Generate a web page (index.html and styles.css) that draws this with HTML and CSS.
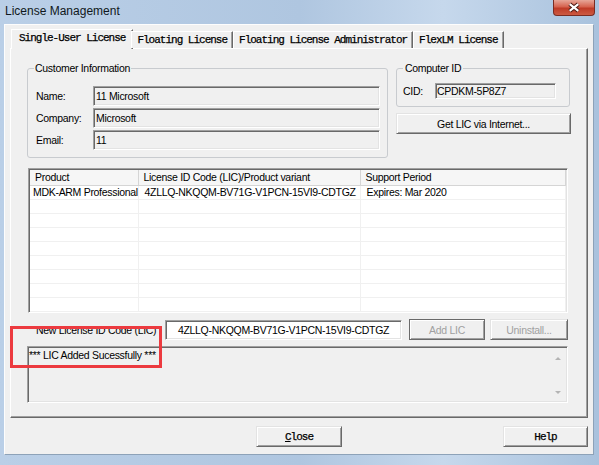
FILE: index.html
```html
<!DOCTYPE html>
<html lang="en">
<head>
  <meta charset="UTF-8">
  <title>License Management</title>
  <link rel="stylesheet" href="styles.css">
</head>
<body>
  <div class="window">
    <div class="titlebar">
      <span class="title">License Management</span>
      <button class="close-x" title="Close">
        <svg width="42" height="15" viewBox="0 0 42 15">
          <path d="M16.5 4 L25.5 11 M25.5 4 L16.5 11" stroke="#4b1a14" stroke-width="4.4" fill="none"/>
          <path d="M16.5 4 L25.5 11 M25.5 4 L16.5 11" stroke="#fff" stroke-width="2.2" fill="none"/>
        </svg>
      </button>
    </div>

    <div class="client">
      <div class="tabs">
        <div class="tab active">Single-User License</div>
        <div class="tab">Floating License</div>
        <div class="tab">Floating License Administrator</div>
        <div class="tab">FlexLM License</div>
      </div>

      <div class="panel">
        <div class="top-row">
          <fieldset class="group customer">
            <legend>Customer Information</legend>
            <div class="field">
              <label>Name:</label>
              <input type="text" class="edit" readonly value="11 Microsoft">
            </div>
            <div class="field">
              <label>Company:</label>
              <input type="text" class="edit" readonly value="Microsoft">
            </div>
            <div class="field">
              <label>Email:</label>
              <input type="text" class="edit" readonly value="11">
            </div>
          </fieldset>

          <div class="right-col">
            <fieldset class="group computer">
              <legend>Computer ID</legend>
              <div class="field">
                <label>CID:</label>
                <input type="text" class="edit cid" readonly value="CPDKM-5P8Z7">
              </div>
            </fieldset>
            <button class="btn get-lic">Get LIC via Internet...</button>
          </div>
        </div>

        <div class="listview">
          <table>
            <thead>
              <tr>
                <th class="col-product">Product</th>
                <th class="col-lic">License ID Code (LIC)/Product variant</th>
                <th class="col-period">Support Period</th>
              </tr>
            </thead>
            <tbody>
              <tr>
                <td class="first">MDK-ARM Professional</td>
                <td>4ZLLQ-NKQQM-BV71G-V1PCN-15VI9-CDTGZ</td>
                <td>Expires: Mar 2020</td>
              </tr>
              <tr><td></td><td></td><td></td></tr>
              <tr><td></td><td></td><td></td></tr>
              <tr><td></td><td></td><td></td></tr>
              <tr><td></td><td></td><td></td></tr>
              <tr><td></td><td></td><td></td></tr>
              <tr><td></td><td></td><td></td></tr>
              <tr><td></td><td></td><td></td></tr>
              <tr><td></td><td></td><td></td></tr>
            </tbody>
          </table>
        </div>

        <div class="lic-row">
          <label>New License ID Code (LIC)</label>
          <input type="text" class="edit new-lic" value="4ZLLQ-NKQQM-BV71G-V1PCN-15VI9-CDTGZ">
          <button class="btn default add-lic" disabled>Add LIC</button>
          <button class="btn uninstall" disabled>Uninstall...</button>
        </div>

        <div class="output">
          <div class="output-text">*** LIC Added Sucessfully ***</div>
          <div class="scrollbar">
            <span class="arrow up"></span>
            <span class="arrow down"></span>
          </div>
        </div>
      </div>

      <div class="footer">
        <button class="btn mono close"><u>C</u>lose</button>
        <button class="btn mono help">Help</button>
      </div>

      <div class="callout"></div>
    </div>
  </div>
</body>
</html>
```

FILE: styles.css
```css
* {
  box-sizing: border-box;
}
body {
  margin: 0;
  font-family: "Liberation Sans", Arial, sans-serif;
  font-size: 10.5px;
  letter-spacing: -0.3px;
  color: #000;
  background: #fff;
}
.window {
  width: 599px;
  height: 465px;
  padding: 0 5px 10px 4px;
  display: flex;
  flex-direction: column;
  background: linear-gradient(90deg, #bacfe7 0%, #afc6e0 50%, #c6d8ec 74%, #a9c2dd 100%);
}
.titlebar {
  height: 24px;
  flex: none;
  display: flex;
  justify-content: space-between;
  align-items: flex-start;
}
.title {
  font-family: "Liberation Sans", Arial, sans-serif;
  font-size: 12px;
  letter-spacing: 0;
  line-height: 16px;
  margin: 3px 0 0 1px;
  color: #101820;
}
.close-x {
  width: 42px;
  height: 16px;
  margin-right: -1px;
  padding: 0;
  border: 1px solid #7a2c22;
  border-top: none;
  border-radius: 0 0 4px 4px;
  background: linear-gradient(#e7a698, #d6634f 45%, #bf3b27 55%, #cc5a42);
  display: flex;
  align-items: center;
  justify-content: center;
}
.client {
  flex: 1;
  position: relative;
  display: flex;
  flex-direction: column;
  padding: 4px 5px 0 5px;
  background: #f0f0f0;
  border: 1px solid;
  border-color: #fdfdfd #8da2b8 #8da2b8 #fdfdfd;
}

/* tabs */
.tabs {
  height: 19px;
  flex: none;
  display: flex;
  align-items: flex-end;
  padding-left: 3px;
  position: relative;
  z-index: 1;
}
.tab {
  height: 17px;
  padding: 0 5px;
  font-family: "Liberation Mono", monospace;
  font-size: 11px;
  letter-spacing: -1px;
  line-height: 16px;
  white-space: nowrap;
  background: #f0f0f0;
  border: 1px solid;
  border-bottom: none;
  border-color: #fff #696969 transparent #fff;
  box-shadow: inset -1px 0 #a0a0a0;
  -webkit-text-stroke: 0.25px #000;
}
.tab.active {
  height: 20px;
  margin: 0 -2px -1px -2px;
  padding: 0 7px;
  line-height: 17px;
}

/* panel */
.panel {
  height: 370px;
  flex: none;
  display: flex;
  flex-direction: column;
  padding: 13px 16px 0 16px;
  border: 1px solid;
  border-color: #fff #696969 #696969 #fff;
  box-shadow: inset -1px -1px #a0a0a0;
}
.top-row {
  display: flex;
  gap: 8px;
}
.group {
  margin: 0;
  border: 1px solid #c8cbcf;
  border-radius: 3px;
  min-inline-size: 0;
}
.group legend {
  padding: 0 1px;
  line-height: 13px;
}
.customer {
  width: 361px;
  padding: 11px 7px 5px 8px;
}
.customer legend {
  margin-left: -2px;
}
.field {
  display: flex;
  align-items: center;
  height: 20px;
  margin-bottom: 2px;
}
.customer label {
  width: 57px;
  flex: none;
}
.edit {
  font: inherit;
  letter-spacing: inherit;
  color: #000;
  height: 20px;
  padding: 0 2px;
  background: #f0f0f0;
  border: 1px solid;
  border-color: #a0a0a0 #fff #fff #a0a0a0;
  box-shadow: inset 1px 1px #696969, inset -1px -1px #e3e3e3;
  outline: none;
}
.customer .edit {
  width: 287px;
}
.right-col {
  width: 175px;
  display: flex;
  flex-direction: column;
}
.computer {
  width: 174px;
  padding: 8px 6px 7px 6px;
}
.computer legend {
  padding: 0 2px;
}
.computer .field {
  height: 16px;
  margin: 0;
}
.computer label {
  width: 32px;
  flex: none;
}
.edit.cid {
  width: 121px;
  height: 16px;
  padding: 0 1px;
}

/* buttons */
.btn {
  font: inherit;
  letter-spacing: inherit;
  color: #000;
  height: 21px;
  padding: 0;
  background: #f0f0f0;
  border: 1px solid;
  border-color: #e3e3e3 #696969 #696969 #e3e3e3;
  box-shadow: inset 1px 1px #fff, inset -1px -1px #a0a0a0;
}
.btn:disabled {
  color: #a0a0a0;
}
.btn.default {
  border-color: #6a6a6a;
}
.get-lic {
  width: 175px;
  margin-top: 6px;
}
.mono {
  font-family: "Liberation Mono", monospace;
  font-size: 11px;
  letter-spacing: -1px;
  -webkit-text-stroke: 0.25px #000;
}

/* list view */
.listview {
  width: 540px;
  height: 145px;
  margin: 10px 0 0 1px;
  padding: 1px;
  overflow: hidden;
  background: #fff;
  border: 1px solid;
  border-color: #a0a0a0 #fff #fff #a0a0a0;
  box-shadow: inset 1px 1px #696969, inset -1px -1px #e3e3e3;
}
.listview table {
  width: 536px;
  table-layout: fixed;
  border-collapse: collapse;
}
.listview th {
  height: 15px;
  padding: 0 0 0 5px;
  font-weight: normal;
  text-align: left;
  background: #f6f6f6;
  border-right: 1px solid #d5d5d5;
  border-bottom: 1px solid #d5d5d5;
  white-space: nowrap;
  overflow: hidden;
}
.col-product { width: 108px; }
.col-lic { width: 222px; padding-left: 6px; }
.listview td {
  height: 14px;
  padding: 0 0 0 6px;
  border-right: 1px solid #f0f0f0;
  border-bottom: 1px solid #f0f0f0;
  white-space: nowrap;
  overflow: hidden;
}
.listview td.first {
  padding-left: 3px;
}

/* new LIC row */
.lic-row {
  display: flex;
  align-items: center;
  height: 21px;
  margin-top: 6px;
}
.lic-row label {
  width: 138px;
  flex: none;
  padding-left: 9px;
}
.edit.new-lic {
  width: 237px;
  text-align: center;
  background: #fff;
}
.add-lic {
  width: 76px;
  margin-left: 7px;
}
.uninstall {
  width: 78px;
  margin-left: 5px;
}

/* output */
.output {
  width: 541px;
  height: 57px;
  margin-top: 6px;
  display: flex;
  border: 1px solid;
  border-color: #a0a0a0 #fff #fff #a0a0a0;
  box-shadow: inset 1px 1px #696969, inset -1px -1px #e3e3e3;
  padding: 1px;
}
.output-text {
  flex: 1;
  padding-top: 1px;
  line-height: 13px;
}
.scrollbar {
  width: 17px;
  display: flex;
  flex-direction: column;
  justify-content: space-between;
  align-items: center;
  padding: 9px 0 7px 0;
}
.arrow {
  width: 0;
  height: 0;
  border-left: 3px solid transparent;
  border-right: 3px solid transparent;
}
.arrow.up {
  border-bottom: 3px solid #b4b4b4;
}
.arrow.down {
  border-top: 3px solid #b4b4b4;
}

/* footer */
.footer {
  display: grid;
  grid-template-columns: 1fr auto 1fr;
  padding-top: 8px;
}
.footer .close {
  grid-column: 2;
  width: 86px;
}
.footer .help {
  grid-column: 3;
  justify-self: end;
  width: 85px;
}

/* red annotation box drawn over the dialog */
.callout {
  position: absolute;
  left: 5px;
  top: 301px;
  width: 152px;
  height: 42px;
  border: 3px solid #ec3a3f;
  pointer-events: none;
}
```
